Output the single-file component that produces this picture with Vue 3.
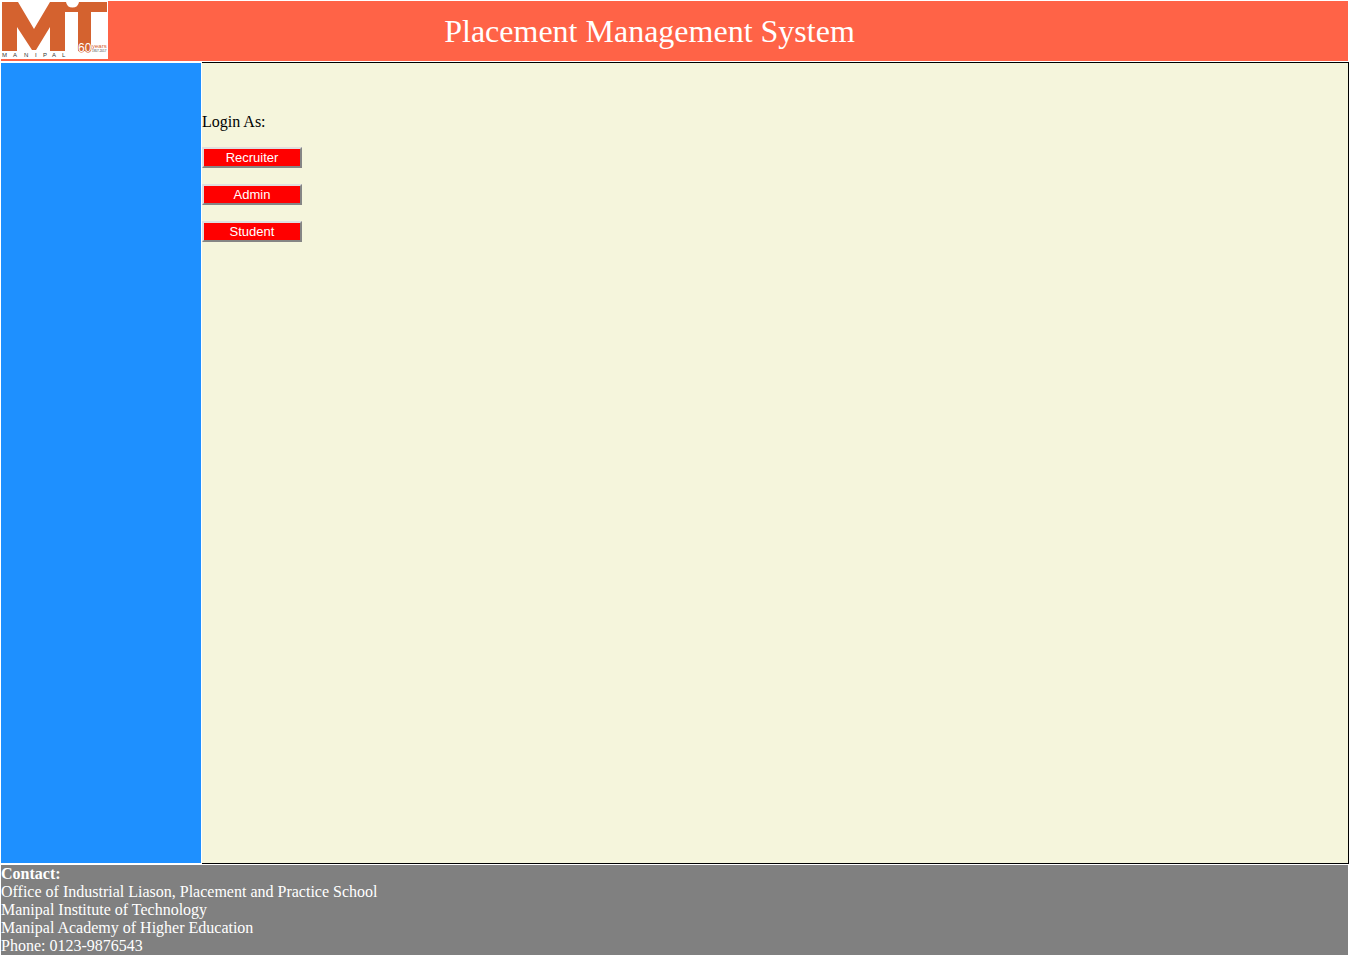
<script setup>
const roles = ['Recruiter', 'Admin', 'Student']
const contact = [
  'Office of Industrial Liason, Placement and Practice School',
  'Manipal Institute of Technology',
  'Manipal Academy of Higher Education',
  'Phone: 0123-9876543',
]
</script>

<template>
  <div class="page">
    <header class="header">
      <svg class="logo" viewBox="0 0 107 58" role="img" aria-label="MIT Manipal, 60 years">
        <rect width="107" height="58" fill="#fff" />
        <path
          fill="#d4622f"
          d="M1 1H17L33 28L49 1H65Q66 6.500 71.500 6.500Q77 6.500 78 1H106V11H90V50H77V11H64V50H49V26L35 49H31L16 26V50H1Z"
        />
        <g class="logo-text">
          <text class="place" y="56" x="1 12 23 34 42 51 61">MANIPAL</text>
          <text class="sixty" x="77" y="51">60</text>
          <text class="years" x="91" y="47">years</text>
          <text class="dates" x="91" y="51">1957-2017</text>
        </g>
      </svg>
      <h1 class="title">Placement Management System</h1>
    </header>

    <div class="body">
      <nav class="side" aria-label="Sidebar"></nav>
      <main class="content">
        <p class="prompt">Login As:</p>
        <button v-for="role in roles" :key="role" type="button" class="role">{{ role }}</button>
      </main>
    </div>

    <footer class="footer">
      <strong>Contact:</strong>
      <div v-for="line in contact" :key="line">{{ line }}</div>
    </footer>
  </div>
</template>

<style scoped>
.page {
  display: flex;
  flex-direction: column;
  box-sizing: border-box;
  min-height: 100vh;
  font: 16px/18px "Liberation Serif", "Times New Roman", serif;
  color: #000;
}
.header {
  display: flex;
  align-items: flex-start;
  height: 60px;
  border: 1px solid #fff;
  background: tomato;
  color: #fff;
}
.logo {
  display: block;
  flex: none;
  width: 107px;
  height: 58px;
}
.logo-text {
  font-family: "Liberation Sans", Arial, sans-serif;
}
.place {
  font-size: 6px;
  fill: #333;
}
.sixty {
  font-size: 12px;
  fill: #fff;
  stroke: #d4622f;
  stroke-width: 1px;
  paint-order: stroke;
}
.years {
  font-size: 6px;
  fill: #d4622f;
}
.dates {
  font-size: 3px;
  fill: #333;
}
.title {
  flex: 1;
  margin: 0;
  padding-right: 157px;
  font-size: 32px;
  font-weight: 400;
  line-height: 60px;
  text-align: center;
}
.body {
  display: flex;
  flex: 1;
}
.side {
  flex: none;
  width: 200px;
  border: 1px solid #fff;
  background: dodgerblue;
}
.content {
  display: flex;
  flex: 1;
  flex-direction: column;
  align-items: flex-start;
  gap: 16px;
  padding-top: 50px;
  border: 1px solid #000;
  border-left: 0;
  background: beige;
}
.prompt {
  margin: 0;
}
.role {
  width: 100px;
  height: 21px;
  padding: 0;
  border: 2px solid;
  border-color: #dfdfdf #858585 #858585 #dfdfdf;
  background: red;
  color: #fff;
  font: 13px/15px "Liberation Sans", Arial, sans-serif;
}
.footer {
  border: 1px solid #fff;
  background: gray;
  color: #fff;
}
.footer strong {
  display: block;
}
</style>

<style>
body {
  margin: 0;
}
</style>
